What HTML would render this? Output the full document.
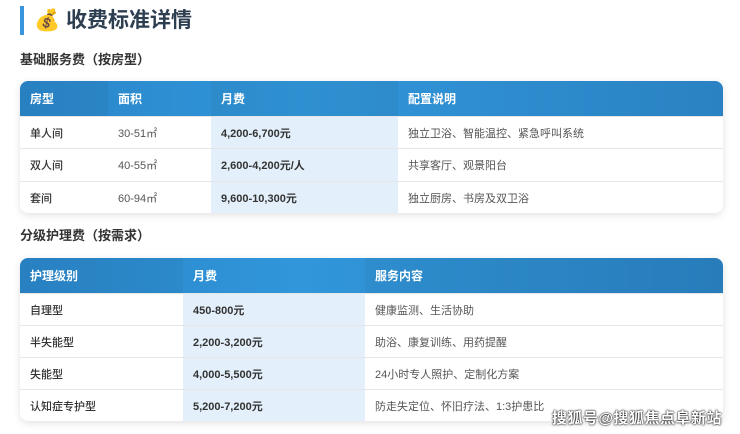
<!DOCTYPE html>
<html><head><meta charset="utf-8"><style>
*{margin:0;padding:0;box-sizing:border-box}
body{width:740px;height:434px;background:#fff;font-family:"Liberation Sans","Noto Sans CJK SC",sans-serif;color:#333;position:relative;overflow:hidden}
.bar{position:absolute;left:20px;top:6px;width:4px;height:29px;background:#3a95dc}
.title{position:absolute;left:34px;top:6px;font-size:21px;font-weight:bold;color:#2c3e50;line-height:30px}
.sub{position:absolute;left:20px;font-size:13px;font-weight:bold;color:#333;line-height:18px}
.tbl{position:absolute;left:20px;width:703px;border-radius:8px;overflow:hidden;box-shadow:0 2px 8px rgba(0,0,0,.12);background:#fff}
.hd{display:flex;height:35px;background:linear-gradient(90deg,#2a86c9,#3196da 40%,#2a82c2);color:#fff;font-size:12px;font-weight:bold}
.hd div,.r div{padding-left:10px;display:flex;align-items:center}
.hd div:nth-child(odd){background:rgba(0,0,0,.04)}
.r{display:flex;border-top:1px solid #e6e6e6;font-size:11px;color:#555}
.r div:first-child{color:#333;font-weight:500}
.hl{background:#e3f0fb;font-weight:bold;color:#333!important}
.wm{position:absolute;right:18px;top:407px;font-size:15px;color:#fff;text-shadow:0 0 2px #000,0 0 1px #000;font-weight:bold;letter-spacing:.5px}
</style></head><body>
<div class="bar"></div>
<div class="title">💰 收费标准详情</div>
<div class="sub" style="top:51px">基础服务费（按房型）</div>
<div class="tbl" style="top:81px;height:132px">
<div class="hd"><div style="width:88px">房型</div><div style="width:103px">面积</div><div style="width:187px">月费</div><div style="width:325px">配置说明</div></div>
<div class="r" style="height:32px"><div style="width:88px">单人间</div><div style="width:103px">30-51㎡</div><div class="hl" style="width:187px">4,200-6,700元</div><div style="width:325px">独立卫浴、智能温控、紧急呼叫系统</div></div>
<div class="r" style="height:33px"><div style="width:88px">双人间</div><div style="width:103px">40-55㎡</div><div class="hl" style="width:187px">2,600-4,200元/人</div><div style="width:325px">共享客厅、观景阳台</div></div>
<div class="r" style="height:32px"><div style="width:88px">套间</div><div style="width:103px">60-94㎡</div><div class="hl" style="width:187px">9,600-10,300元</div><div style="width:325px">独立厨房、书房及双卫浴</div></div>
</div>
<div class="sub" style="top:227px">分级护理费（按需求）</div>
<div class="tbl" style="top:258px;height:163px">
<div class="hd"><div style="width:163px">护理级别</div><div style="width:182px">月费</div><div style="width:358px">服务内容</div></div>
<div class="r" style="height:32px"><div style="width:163px">自理型</div><div class="hl" style="width:182px">450-800元</div><div style="width:358px">健康监测、生活协助</div></div>
<div class="r" style="height:32px"><div style="width:163px">半失能型</div><div class="hl" style="width:182px">2,200-3,200元</div><div style="width:358px">助浴、康复训练、用药提醒</div></div>
<div class="r" style="height:32px"><div style="width:163px">失能型</div><div class="hl" style="width:182px">4,000-5,500元</div><div style="width:358px">24小时专人照护、定制化方案</div></div>
<div class="r" style="height:32px"><div style="width:163px">认知症专护型</div><div class="hl" style="width:182px">5,200-7,200元</div><div style="width:358px">防走失定位、怀旧疗法、1:3护患比</div></div>
</div>
<div class="wm">搜狐号@搜狐焦点阜新站</div>
</body></html>
